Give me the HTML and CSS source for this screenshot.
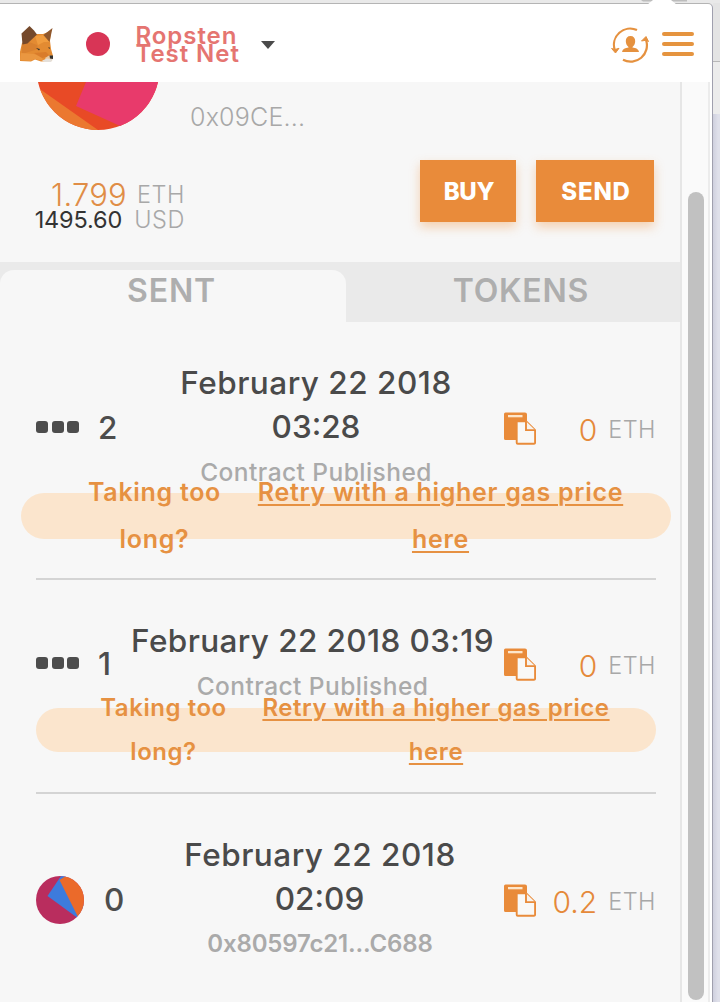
FILE: index.html
```html
<!DOCTYPE html>
<html lang="en">
<head>
<meta charset="utf-8">
<title>Wallet</title>
<link rel="stylesheet" href="styles.css">
</head>
<body>
<svg class="symbols" width="0" height="0">
  <symbol id="copy" viewBox="0 0 32 33">
    <path fill="#e98b3a" d="M1.500 .5H21q2 0 2 2v7H14q-2 0-2 2V28H1.500Q0 28 0 26.500V2Q0 .5 1.500 .5Z"/>
    <path fill="#fde6cb" d="M4 3h14.500v2.300H4z"/>
    <path fill="#f9f8f6" stroke="#e98b3a" stroke-width="1.900" stroke-linejoin="round" d="M12.700 9.200h9.300l9.100 9v12.500q0 1.100-1.100 1.100H13.700q-1 0-1-1z"/>
    <path fill="#f7f3ee" stroke="#e98b3a" stroke-width="1.900" d="M22 9.200v8.900h9"/>
  </symbol>
</svg>
<div class="browser">
  <div class="popup">
    <header class="header">
      <svg class="fox" viewBox="0 0 34 38" width="34" height="38">
        <path fill="#e38b32" d="M2 18 9 12l8-3 6 0 8-3-1 10 1 8 2 7-4 5-8 .5-6-2-4 2-11-.5-1-5z"/>
        <path fill="#f09c3e" d="M15 11l8-1 7 7-6 0-6 3z"/>
        <path fill="#d9812f" d="M2 18l7-1 8 3 1 4L2 29z"/>
        <path fill="#ea9740" d="M0 35l1-7 13 1 8 3 1 4-8-2-5 2z"/>
        <path fill="#d97c2b" d="M14 28l12-1 4 4-8 2z"/>
        <path fill="#75492b" d="M9.500 1l-8 7.500 1 11 5-1 9.500-9-3-4z"/>
        <path fill="#8f572c" d="M32.500 3l-9 7 6 7z"/>
        <path fill="#e9c7a2" d="M25 33l4-2.500 4 .5-1 5-5 1z"/>
        <path fill="#e5e0da" d="M22 35.500l5-2 5.500 1-1.500 2.500h-6z"/>
        <path fill="#33322f" d="M29.500 30.500h3.500v3.500l-3-.5zM16 23l4 1-1 1.500zM28 22.500l2 0-.5 1.500z"/>
      </svg>
      <span class="net-dot"></span>
      <div class="net-name"><div>Ropsten</div><div>Test Net</div></div>
      <span class="caret"></span>
      <svg class="switch" viewBox="0 0 38 36" width="38" height="36" fill="none" stroke="#e5913f" stroke-width="2.200">
        <path d="M26 3A16.300 16.300 0 0 0 3.800 23M12 32.800A16.300 16.300 0 0 0 35 13"/>
        <path fill="#e5913f" stroke-linejoin="round" stroke-width="1" d="M.6 21.500l3.400 1 4-1.200-3.500 4.700zM30.500 14l4.500-4.500 2.500 5-3-1.200z"/>
        <path fill="#e5913f" stroke="none" d="M19.500 9c3 0 4.700 2 4.700 5 0 2.500-1 4.500-2.700 6v.5c3.500.5 6 1.500 6.500 4.500H11c.5-3 3-4 6.500-4.500V20c-1.700-1.500-2.700-3.500-2.700-6 0-3 1.700-5 4.700-5z"/>
      </svg>
      <div class="menu"><i></i><i></i><i></i></div>
    </header>
    <div class="body">
      <main class="content">
        <section class="account">
          <div class="identity">
            <svg class="avatar" viewBox="0 0 122 48" width="122" height="48">
              <clipPath id="disc"><circle cx="61" cy="-13.500" r="61.500"/></clipPath>
              <g clip-path="url(#disc)">
                <path fill="#e84a26" d="M0 0h122v48H0z"/>
                <path fill="#eb7830" d="M0 5 61 48H0z"/>
                <path fill="#e83a6b" d="M49 0h73v48H92L39 24z"/>
              </g>
            </svg>
            <span class="address">0x09CE...</span>
          </div>
          <div class="funds">
            <div class="balances">
              <div class="eth"><b>1.799</b><span>ETH</span></div>
              <div class="usd"><b>1495.60</b><span>USD</span></div>
            </div>
            <div class="buttons"><button class="buy">BUY</button><button class="send">SEND</button></div>
          </div>
        </section>
        <nav class="tabs"><div class="tab active">SENT</div><div class="tab">TOKENS</div></nav>
        <section class="tx tx-first">
          <div class="tx-main">
            <div class="status"><span class="dots"><i></i><i></i><i></i></span><b>2</b></div>
            <div class="info"><div class="date">February 22 2018</div><div class="date time">03:28</div><div class="desc">Contract Published</div></div>
            <div class="value"><svg width="32" height="33"><use href="#copy"/></svg><b>0</b><span>ETH</span></div>
          </div>
          <div class="retry">
            <div class="ask"><div>Taking too</div><div>long?</div></div>
            <div class="link"><div>Retry with a higher gas price</div><div>here</div></div>
          </div>
        </section>
        <section class="tx tx-second">
          <div class="tx-main">
            <div class="status"><span class="dots"><i></i><i></i><i></i></span><b>1</b></div>
            <div class="info"><div class="date">February 22 2018 03:19</div><div class="desc">Contract Published</div></div>
            <div class="value"><svg width="32" height="33"><use href="#copy"/></svg><b>0</b><span>ETH</span></div>
          </div>
          <div class="retry">
            <div class="ask"><div>Taking too</div><div>long?</div></div>
            <div class="link"><div>Retry with a higher gas price</div><div>here</div></div>
          </div>
        </section>
        <section class="tx tx-third">
          <div class="tx-main">
            <div class="status">
              <svg class="blockie" viewBox="0 0 48 48" width="48" height="48">
                <clipPath id="small"><circle cx="24" cy="24" r="24"/></clipPath>
                <g clip-path="url(#small)"><path fill="#b92d5e" d="M0 0h48v48H0z"/><path fill="#3d7bdc" d="M25 0 11.500 20 41 41.500 48 30 30 0z"/><path fill="#eb6a2a" d="M23.500 4 30 0h18v38l-6.500 2z"/></g>
              </svg><b>0</b></div>
            <div class="info"><div class="date">February 22 2018</div><div class="date time">02:09</div><div class="desc hash">0x80597c21...C688</div></div>
            <div class="value"><svg width="32" height="33"><use href="#copy"/></svg><b>0.2</b><span>ETH</span></div>
          </div>
        </section>
      </main>
      <div class="track"><div class="thumb"></div></div>
    </div>
  </div>
  <div class="page-edge"><div class="toolbar"></div><div class="bookmarks"></div></div>
  <svg class="pointer" viewBox="0 0 46 5" width="46" height="5"><path fill="#bdbdbd" d="M0 0h46v1.500H2z"/><path fill="#fff" d="M12 0h18l6 5H6z"/></svg>
</div>
</body>
</html>
```
FILE: styles.css
```css
* { box-sizing: border-box; }
body { margin: 0; font-family: Inter, "Liberation Sans", sans-serif; }
b { font-weight: inherit; }
.symbols { position: absolute; }
.browser { position: relative; display: flex; width: 720px; height: 1002px; padding-top: 3px; overflow: hidden; background: #e9e9e9; }
.pointer { position: absolute; left: 641px; top: 0; }

.popup { width: 713px; height: 999px; background: #fff; border-top: 1px solid #b4b4b4; border-right: 1px solid #a0a0ae; border-radius: 0 5px 0 0; }
.page-edge { flex: 1; background: linear-gradient(90deg, #cfd0de, #dfe0ea 5px); }
.toolbar { height: 59px; background: #e4e4e4; border-bottom: 1px solid #b8b8b8; }
.bookmarks { height: 52px; background: #ececec; }

.header { display: flex; align-items: center; height: 78px; padding-left: 20px; }
.fox { margin-top: 1px; }
.net-dot { width: 24px; height: 24px; margin: 2px 0 0 32px; border-radius: 50%; background: #d83556; }
.net-name { width: 106px; margin: 3px 0 0 25.500px; font-size: 24px; font-weight: 600; line-height: 18px; letter-spacing: .95px; color: #e57571; white-space: nowrap; }
.caret { margin: 4px 0 0 19px; border: 7.500px solid transparent; border-top: 8.500px solid #4a4a4a; border-bottom: 0; }
.switch { margin: 4px 0 0 336px; }
.menu { display: flex; flex-direction: column; gap: 6px; margin: 2px 0 0 13px; }
.menu i { width: 32px; height: 4px; border-radius: 2px; background: #e5943f; }

.body { display: flex; height: 920px; }
.content { width: 680px; background: #f7f7f7; }
.track { width: 30px; padding: 110px 2px 0 6px; border-left: 2px solid #e6e6e6; border-right: 2px solid #ececec; background: #fafafa; }
.thumb { width: 16px; height: 808px; border-radius: 8px; background: #c1c1c1; }

.account { height: 180px; }
.identity { display: flex; height: 78px; }
.avatar { margin-left: 37px; }
.address { margin: 20px 0 0 31px; font-size: 25px; font-weight: 300; line-height: 30px; letter-spacing: .2px; color: #a8a8a8; }
.funds { display: flex; justify-content: space-between; padding: 0 26px 0 36px; }
.balances { width: 149px; padding-top: 22px; text-align: right; }
.eth, .usd { display: flex; justify-content: flex-end; align-items: center; line-height: 25px; }
.eth b { margin-right: 10px; font-size: 31px; font-weight: 300; letter-spacing: .2px; color: #e08d46; }
.eth span, .usd span { font-size: 23.500px; font-weight: 300; letter-spacing: .6px; color: #a8a8a8; }
.usd b { margin-right: 12px; font-size: 23.500px; font-weight: 400; letter-spacing: -.15px; color: #333; }
.buttons { display: flex; gap: 20px; }
button { height: 62px; padding: 2px 0 0; border: 0; font: 800 24px/60px Inter, sans-serif; color: #fff; background: #e98b3a; box-shadow: 0 5px 10px rgba(240, 145, 60, .38); }
.buy { width: 96px; padding-left: 2px; letter-spacing: -.3px; }
.send { width: 118px; padding-left: 2px; letter-spacing: .8px; }

.tabs { display: flex; height: 60px; background: #eaeaea; }
.tab { flex: 1; padding: 13px 0 0 16px; font-size: 32px; font-weight: 600; line-height: 32px; letter-spacing: .8px; text-align: center; color: #aeaeae; }
.tab.active { flex: 0 0 346px; height: 52px; margin-top: 8px; padding: 5px 3px 0 0; border-radius: 14px 14px 0 0; background: #f7f7f7; }

.tx { padding-top: 39px; }
.tx-main { display: flex; margin: 0 24px 0 36px; align-items: center; }
.status { display: flex; align-items: center; width: 96px; font-size: 31.500px; font-weight: 500; color: #4d4d4d; }
.dots { display: flex; gap: 3.500px; margin-right: 19px; }
.dots i { width: 12px; height: 12px; border-radius: 3px; background: #4d4d4d; }
.info { width: 368px; text-align: center; }
.date { font-size: 31.500px; font-weight: 500; line-height: 44px; letter-spacing: .5px; color: #4a4a4a; white-space: nowrap; }
.time { letter-spacing: 0; }
.desc { padding-top: 1px; margin-bottom: -1px; font-size: 24.500px; font-weight: 500; line-height: 44px; letter-spacing: .45px; color: #aaa; }
.value { display: flex; flex: 1; align-items: center; margin-left: 4px; }
.value svg { margin-top: 3px; }
.value b { flex: 1; margin: 5px 11px 0 0; font-size: 30px; font-weight: 300; text-align: right; color: #e5893a; }
.value span { margin-top: 5px; font-size: 23.500px; font-weight: 300; letter-spacing: .5px; color: #a8a8a8; }

.retry { display: flex; align-items: center; background: #fbe5cd; font-size: 25px; font-weight: 600; line-height: 47px; letter-spacing: .7px; text-align: center; color: #e69142; white-space: nowrap; }
.ask { width: 140px; }
.link { width: 372px; text-decoration: underline; text-decoration-thickness: 2px; text-underline-offset: 3px; }
.tx-first::after, .tx-second::after { content: ""; display: block; height: 2px; margin: 39px 24px 0 36px; background: #d4d4d4; }
.tx-first .retry { height: 46px; gap: 30px; margin: 0 9px 0 21px; padding-left: 63.500px; border-radius: 23px; }
.tx-second .retry { height: 44px; gap: 22.500px; margin: 1px 24px 0 36px; padding-left: 57.500px; border-radius: 22px; font-size: 24px; line-height: 44px; letter-spacing: .55px; }
.tx-second .link { width: 360px; }
.tx-second::after { margin-top: 40px; }
.tx-second .status { width: 92px; }
.tx-second .info { width: 369px; }
.tx-second .date { letter-spacing: .38px; }
.tx-second .value { margin-left: 7px; }
.tx-third .status { width: 104px; }
.tx-third .info { width: 360px; }
.tx-third .time { padding-right: 1px; }
.blockie { margin: 2px 20px 0 0; }
.hash { font-size: 24px; font-weight: 600; letter-spacing: -.15px; }
```
